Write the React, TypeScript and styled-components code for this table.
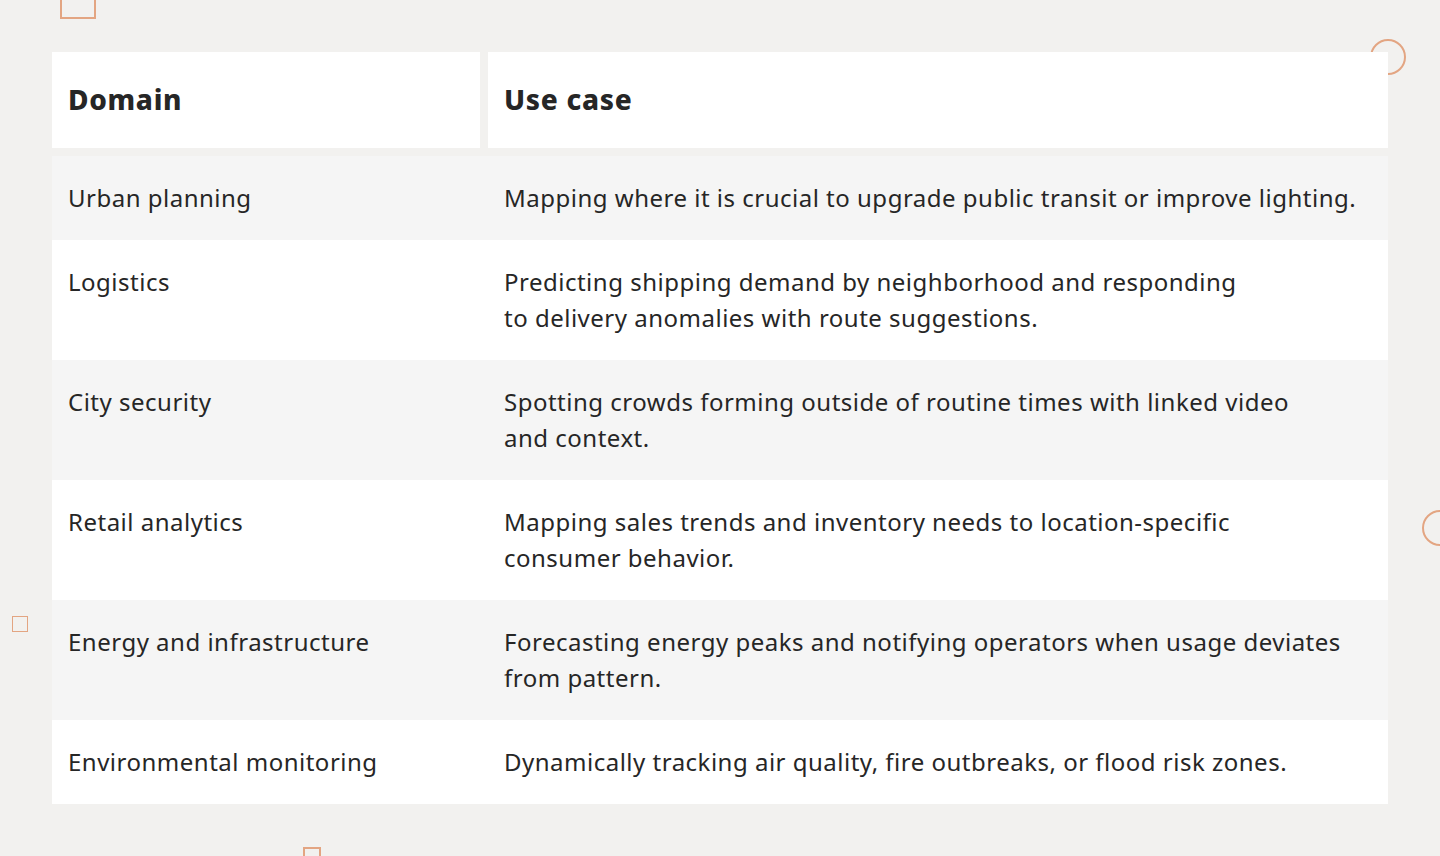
import styled, { createGlobalStyle } from 'styled-components';

const rows = [
  { domain: 'Urban planning', lines: ['Mapping where it is crucial to upgrade public transit or improve lighting.'] },
  {
    domain: 'Logistics',
    lines: ['Predicting shipping demand by neighborhood and responding', 'to delivery anomalies with route suggestions.'],
  },
  {
    domain: 'City security',
    lines: ['Spotting crowds forming outside of routine times with linked video', 'and context.'],
  },
  {
    domain: 'Retail analytics',
    lines: ['Mapping sales trends and inventory needs to location-specific', 'consumer behavior.'],
  },
  {
    domain: 'Energy and infrastructure',
    lines: ['Forecasting energy peaks and notifying operators when usage deviates', 'from pattern.'],
  },
  { domain: 'Environmental monitoring', lines: ['Dynamically tracking air quality, fire outbreaks, or flood risk zones.'] },
];

const GlobalStyle = createGlobalStyle`
  html, body {
    margin: 0;
    padding: 0;
    background: #f2f1ef;
  }
  body {
    font-family: 'Noto Sans', 'Liberation Sans', sans-serif;
    color: #262626;
  }
`;

const Page = styled.div`
  position: relative;
  width: 1440px;
  height: 856px;
  overflow: hidden;
  box-sizing: border-box;
  padding: 52px;
`;

const Square = styled.div<{ $size: number; $border: number }>`
  position: absolute;
  width: ${p => p.$size}px;
  height: ${p => p.$size}px;
  box-sizing: border-box;
  border: ${p => p.$border}px solid #e3a582;
`;

const Ring = styled.div`
  position: absolute;
  width: 36px;
  height: 36px;
  box-sizing: border-box;
  border: 2px solid #e3a582;
  border-radius: 50%;
`;

const Table = styled.div`
  position: relative;
  display: flex;
  flex-direction: column;
  gap: 8px;
`;

const HeaderRow = styled.div`
  display: grid;
  grid-template-columns: 428px 1fr;
  column-gap: 8px;
`;

const HeadCell = styled.div`
  background: #ffffff;
  height: 96px;
  display: flex;
  align-items: center;
  padding: 0 16px 3px;
  box-sizing: border-box;
  font-size: 28px;
  font-weight: 800;
  letter-spacing: 0.7px;
  color: #262626;
`;

const Body = styled.div`
  display: flex;
  flex-direction: column;
`;

const Row = styled.div<{ $shade: boolean }>`
  display: grid;
  grid-template-columns: 428px 1fr;
  column-gap: 8px;
  background: ${p => (p.$shade ? '#f5f5f5' : '#ffffff')};
  padding: 24px 0;
  font-size: 24px;
  line-height: 36px;
  letter-spacing: 0.5px;
`;

const Cell = styled.div`
  padding: 0 16px;
`;

const Line = styled.div`
  white-space: nowrap;
`;

export default function App() {
  return (
    <Page>
      <GlobalStyle />
      <Square $size={36} $border={2} style={{ left: 60, top: -17 }} />
      <Ring style={{ left: 1370, top: 39 }} />
      <Ring style={{ left: 1422, top: 510 }} />
      <Square $size={16} $border={1} style={{ left: 12, top: 616 }} />
      <Square $size={18} $border={2} style={{ left: 303, top: 847 }} />
      <Table>
        <HeaderRow>
          <HeadCell>Domain</HeadCell>
          <HeadCell>Use case</HeadCell>
        </HeaderRow>
        <Body>
          {rows.map((r, i) => (
            <Row key={r.domain} $shade={i % 2 === 0}>
              <Cell>{r.domain}</Cell>
              <Cell>
                {r.lines.map(l => (
                  <Line key={l}>{l}</Line>
                ))}
              </Cell>
            </Row>
          ))}
        </Body>
      </Table>
    </Page>
  );
}
